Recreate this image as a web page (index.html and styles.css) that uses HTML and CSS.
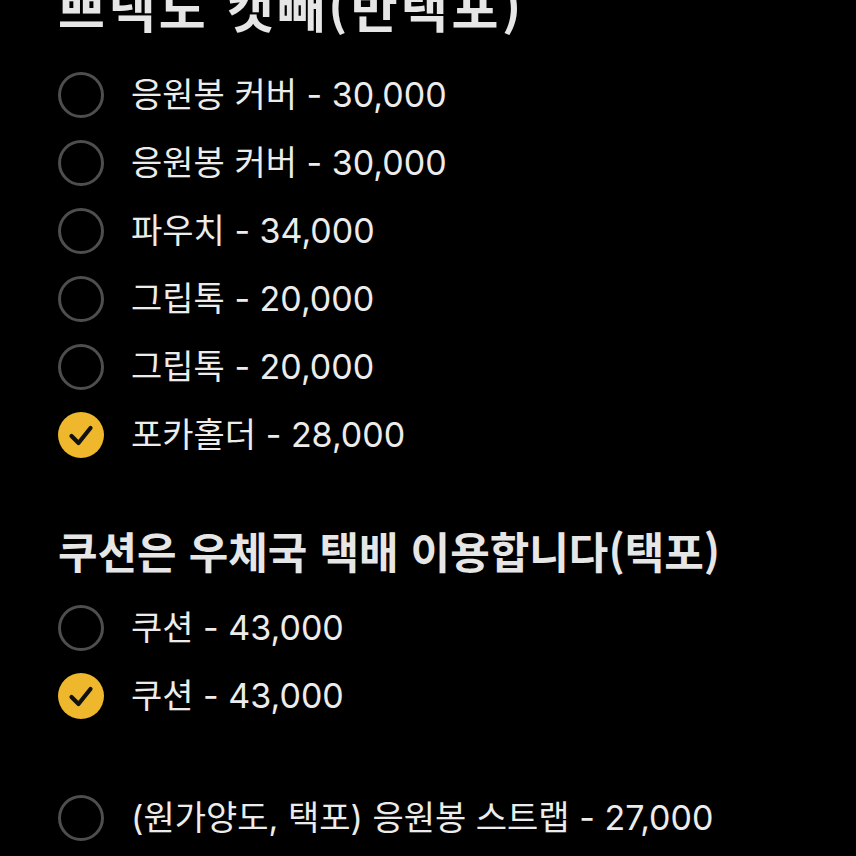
FILE: index.html
```html
<!DOCTYPE html>
<html lang="ko">
<head>
    <meta charset="UTF-8">
    <meta name="viewport" content="width=device-width, initial-scale=1.0">
    <title>옵션 선택</title>
    <link rel="stylesheet" href="styles.css">
</head>
<body>

    <div class="page">
        <!-- 반택포 상품 -->
        <section class="group group-first">
            <h2 class="group-title">쁘넥도 캣빼(반택포)</h2>
            <ul class="options">
                <li class="option"><span class="radio"></span><span class="label">응원봉 커버 - 30,000</span></li>
                <li class="option"><span class="radio"></span><span class="label">응원봉 커버 - 30,000</span></li>
                <li class="option"><span class="radio"></span><span class="label">파우치 - 34,000</span></li>
                <li class="option"><span class="radio"></span><span class="label">그립톡 - 20,000</span></li>
                <li class="option"><span class="radio"></span><span class="label">그립톡 - 20,000</span></li>
                <li class="option selected">
                    <span class="radio">
                        <svg viewBox="0 0 46 46" width="46" height="46"><path d="M13.5 24 L20.5 31 L32.5 16" fill="none" stroke="#111" stroke-width="4.2" stroke-linecap="round" stroke-linejoin="round"/></svg>
                    </span>
                    <span class="label">포카홀더 - 28,000</span>
                </li>
            </ul>
        </section>

        <!-- 쿠션 (택포) -->
        <section class="group">
            <h2 class="group-title">쿠션은 우체국 택배 이용합니다(택포)</h2>
            <ul class="options">
                <li class="option"><span class="radio"></span><span class="label">쿠션 - 43,000</span></li>
                <li class="option selected">
                    <span class="radio">
                        <svg viewBox="0 0 46 46" width="46" height="46"><path d="M13.5 24 L20.5 31 L32.5 16" fill="none" stroke="#111" stroke-width="4.2" stroke-linecap="round" stroke-linejoin="round"/></svg>
                    </span>
                    <span class="label">쿠션 - 43,000</span>
                </li>
            </ul>
        </section>

        <section class="group group-plain">
            <ul class="options">
                <li class="option"><span class="radio"></span><span class="label">(원가양도, 택포) 응원봉 스트랩 - 27,000</span></li>
            </ul>
        </section>
    </div>

</body>
</html>
```

FILE: styles.css
```css
* {
    box-sizing: border-box;
    margin: 0;
    padding: 0;
}

html, body {
    background-color: #000;
    height: 100%;
    overflow: hidden;
}

body {
    font-family: "Noto Sans CJK KR", "Noto Sans", sans-serif;
    color: #ececec;
}

.page {
    padding-left: 58px;
}

.group {
    margin-top: 57px;
}

/* page is scrolled: the first title is half out of view */
.group-first {
    margin-top: -24px;
}

.group-plain {
    margin-top: 54px;
}

.group-title {
    font-size: 43px;
    font-weight: 700;
    line-height: 48px;
    color: #e6e6e6;
    margin-bottom: 20px;
}

.group-first .group-title {
    font-size: 51px;
    line-height: 60px;
    letter-spacing: 3.5px;
    margin-bottom: 25px;
}

.options {
    list-style: none;
}

.option {
    display: flex;
    align-items: center;
    height: 68px;
    gap: 27px;
}

.radio {
    width: 46px;
    height: 46px;
    flex-shrink: 0;
    border-radius: 50%;
    border: 3px solid #4e4e4e;
    display: flex;
    align-items: center;
    justify-content: center;
}

.radio svg {
    display: block;
}

.selected .radio {
    border: none;
    background-color: #eeb72c;
}

.label {
    font-family: Inter, "Noto Sans CJK KR", sans-serif;
    font-size: 34px;
    font-weight: 400;
    line-height: 1;
    color: #ececec;
}
```
